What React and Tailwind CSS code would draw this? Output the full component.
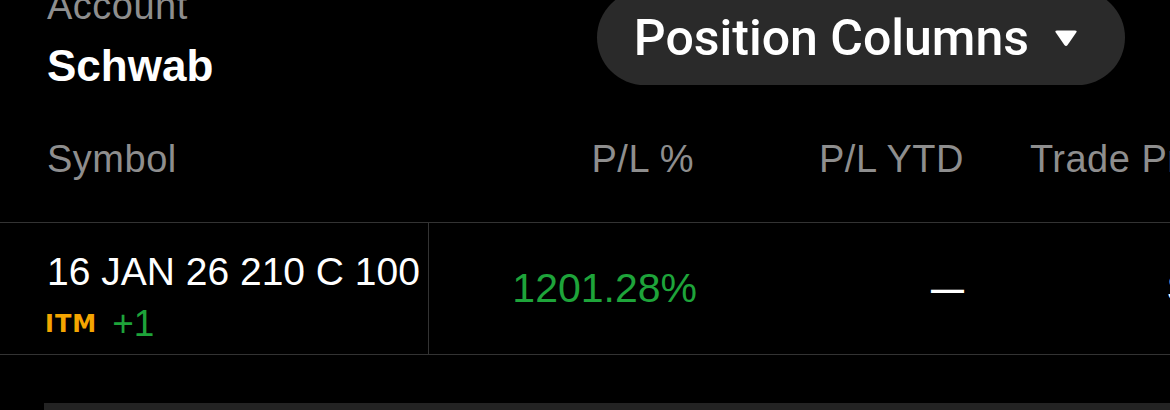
import React from "react";

export default function App() {
  const sans = { fontFamily: '"Liberation Sans", Arial, sans-serif' };
  return (
    <div
      className="w-[1170px] h-[410px] bg-black overflow-hidden flex flex-col text-white"
      style={sans}
    >
      {/* Top section */}
      <div className="h-[95px] flex justify-between items-start shrink-0">
        <div className="pl-[47px] flex flex-col">
          <div className="-mt-[13px] text-[38px] leading-[38px] tracking-[0.5px] text-[#8e8e8e]">Account</div>
          <div className="mt-[19px] text-[44px] leading-[44px] font-bold text-white">Schwab</div>
        </div>
        <div className="mr-[45px] -mt-[10px] h-[95px] rounded-full bg-[#2a2a2a] flex items-center pl-[37px] pr-[47px]">
          <span
            className="text-[50px] leading-none font-medium text-white whitespace-nowrap"
            style={{ fontFamily: 'Roboto, "Liberation Sans", sans-serif' }}
          >
            Position Columns
          </span>
          <svg className="ml-[25px]" width="24" height="18" viewBox="0 0 24 18">
            <path
              d="M3 1.5 H21 Q23.5 1.5 22.2 3.6 L13.6 16 Q12 18 10.4 16 L1.8 3.6 Q0.5 1.5 3 1.5 Z"
              fill="#ffffff"
            />
          </svg>
        </div>
      </div>

      {/* Header row */}
      <div className="h-[128px] shrink-0 border-b border-[#333333] flex items-center text-[38px] leading-none tracking-[0.5px] text-[#8e8e8e] whitespace-nowrap">
        <div className="w-[429px] pl-[47px]">Symbol</div>
        <div className="w-[268px] text-right pr-[3px]">P/L %</div>
        <div className="w-[267px] text-right">P/L YTD</div>
        <div className="flex-1 pl-[66px] overflow-hidden">Trade Price</div>
      </div>

      {/* Data row */}
      <div className="h-[132px] shrink-0 border-b border-[#333333] flex">
        <div className="w-[429px] border-r border-[#333333] pl-[47px] pt-[29px] flex flex-col">
          <div className="text-[39px] leading-none whitespace-nowrap">16 JAN 26 210 C 100</div>
          <div className="mt-[14px] flex items-center">
            <span
              className="text-[24px] leading-none font-bold text-[#f5a500] tracking-[1px] -ml-[2px]"
              style={{ fontFamily: '"DejaVu Sans", Verdana, sans-serif' }}
            >
              ITM
            </span>
            <span className="ml-[15px] text-[37px] leading-none text-[#1ea43a]">+1</span>
          </div>
        </div>
        <div className="w-[268px] flex items-center justify-end">
          <span className="text-[41px] leading-none text-[#1ea43a]">1201.28%</span>
        </div>
        <div className="w-[267px] flex items-center justify-end">
          <span className="text-[33px] leading-none font-bold text-white">—</span>
        </div>
        <div className="flex-1 flex items-center pl-[204px] overflow-hidden">
          <span className="text-[39px] leading-none text-white whitespace-nowrap">$1.25</span>
        </div>
      </div>

      {/* Spacer and bottom bar */}
      <div className="h-[48px] shrink-0" />
      <div className="ml-[44px] h-[10px] bg-[#232323] shrink-0" />
    </div>
  );
}
